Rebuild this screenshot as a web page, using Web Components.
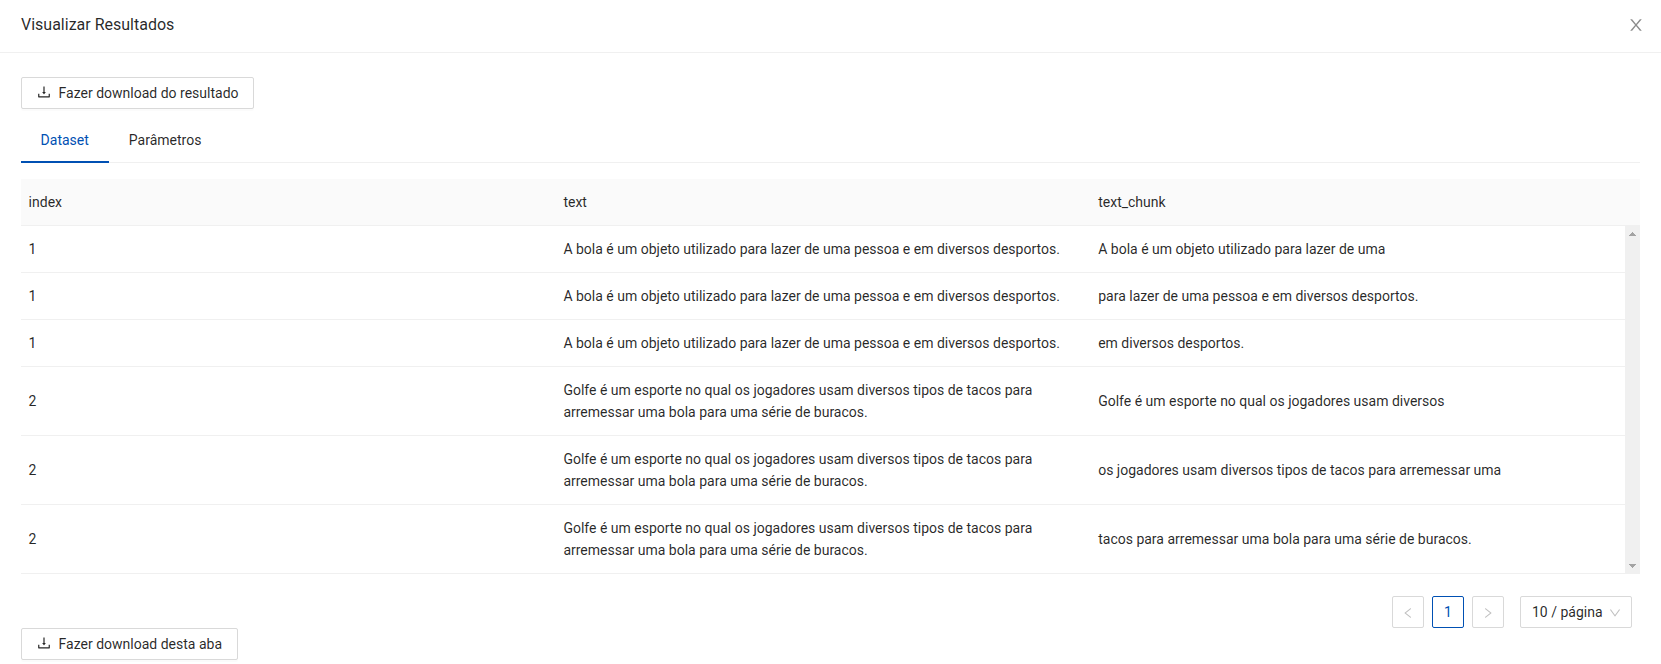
<!DOCTYPE html>
<html lang="pt-BR">
<head>
<meta charset="utf-8">
<title>Visualizar Resultados</title>
<style>
  body { margin: 0; background: #fff; font: 14px/22px Roboto, "Noto Sans", sans-serif; color: rgba(0,0,0,.85); overflow: hidden; }
</style>
</head>
<body>
<result-viewer></result-viewer>
<script>
const ICONS = {
  download: 'M505.7 661a8 8 0 0012.6 0l112-141.7c4.1-5.2.4-12.9-6.3-12.9h-74.1V168c0-4.4-3.6-8-8-8h-60c-4.4 0-8 3.6-8 8v338.3H400c-6.7 0-10.4 7.7-6.3 12.9l112 141.8zM878 626h-60c-4.4 0-8 3.6-8 8v154H214V634c0-4.4-3.6-8-8-8h-60c-4.4 0-8 3.6-8 8v198c0 17.7 14.3 32 32 32h684c17.7 0 32-14.3 32-32V634c0-4.4-3.6-8-8-8z',
  left: 'M724 218.3V141c0-6.7-7.7-10.4-12.9-6.3L260.3 486.8a31.86 31.86 0 000 50.3l450.8 352.1c5.3 4.1 12.9.4 12.9-6.3v-77.3c0-4.9-2.3-9.6-6.1-12.6l-360-281 360-281.1c3.8-3 6.1-7.7 6.1-12.6z',
  right: 'M765.7 486.8L314.9 134.7A7.97 7.97 0 00302 141v77.3c0 4.9 2.3 9.6 6.1 12.6l360 281.1-360 281.1c-3.9 3-6.1 7.7-6.1 12.6V883c0 6.7 7.7 10.4 12.9 6.3l450.8-352.1a31.96 31.96 0 000-50.4z',
  down: 'M884 256h-75c-5.1 0-9.9 2.5-12.9 6.6L512 654.2 227.9 262.6c-3-4.1-7.8-6.6-12.9-6.6h-75c-6.5 0-10.3 7.4-6.5 12.7l352.6 486.1c12.8 17.6 39 17.6 51.7 0l352.6-486.1c3.9-5.3.1-12.7-6.4-12.7z',
  close: 'M563.8 512l262.5-312.9c4.4-5.2.7-13.1-6.1-13.1h-79.8c-4.7 0-9.2 2.1-12.3 5.7L511.6 449.8 295.1 191.7c-3-3.6-7.5-5.7-12.3-5.7H203c-6.8 0-10.5 7.9-6.1 13.1L459.4 512 196.9 824.9A7.95 7.95 0 00203 838h79.8c4.7 0 9.2-2.1 12.3-5.7l216.5-258.1 216.5 258.1c3 3.6 7.5 5.7 12.3 5.7h79.8c6.8 0 10.5-7.9 6.1-13.1L563.8 512z'
};

function define(name, render) {
  customElements.define(name, class extends HTMLElement {
    connectedCallback() {
      if (this.shadowRoot) return;
      this.attachShadow({ mode: 'open' }).innerHTML = '<style>*{box-sizing:border-box}:host{box-sizing:border-box}</style>' + render(this);
    }
  });
}

define('ui-icon', el => `
  <style>:host{display:block;flex:none;width:1em;height:1em}svg{display:block}</style>
  <svg viewBox="64 64 896 896" width="1em" height="1em" fill="currentColor"><path d="${ICONS[el.getAttribute('name')]}"/></svg>`);

define('download-button', () => `
  <style>
    :host{display:flex;width:max-content;height:32px;padding:0 14.6px 0 15px;align-items:center;gap:8px;border:1px solid #d9d9d9;border-radius:2px;background:#fff;box-shadow:0 2px 0 rgba(0,0,0,.015);white-space:nowrap}
    ui-icon{margin-top:-2px}
  </style>
  <ui-icon name="download"></ui-icon><span><slot></slot></span>`);

define('tab-item', () => `
  <style>
    :host{display:block;padding:12px 20px;height:46px}
    :host([active]){color:var(--accent);border-bottom:2px solid var(--accent)}
  </style><slot></slot>`);

define('tab-bar', () => `
  <style>:host{display:flex;height:46px;box-shadow:inset 0 -1px #f0f0f0}</style><slot></slot>`);

define('table-cell', () => `
  <style>:host{display:flex;align-items:center;padding:12px 8px;min-width:0}</style><span><slot></slot></span>`);

define('table-row', el => `
  <style>
    :host{display:grid;grid-template-columns:repeat(3,1fr);border-bottom:1px solid #f0f0f0}
    :host([head]){background:#fafafa;padding-right:15px}
  </style>` + el.getAttribute('cells').split('|').map(c => `<table-cell>${c}</table-cell>`).join(''));

define('scroll-track', () => `
  <style>
    :host{display:flex;flex-direction:column;justify-content:space-between;align-items:center;width:15px;background:#f0f0f0;padding:7px 0 6px;margin-top:-1px}
    svg{display:block}
  </style>
  <svg width="7" height="4" fill="#a3a3a3" shape-rendering="crispEdges"><path d="M3 0h1v1h1v1h1v1h1v1H0V3h1V2h1V1h1z"/></svg>
  <svg width="7" height="4" fill="#a3a3a3" shape-rendering="crispEdges"><path d="M0 0h7v1H6v1H5v1H4v1H3V3H2V2H1V1H0z"/></svg>`);

define('data-table', () => {
  const a = 'A bola é um objeto utilizado para lazer de uma pessoa e em diversos desportos.';
  const g = 'Golfe é um esporte no qual os jogadores usam diversos tipos de tacos para arremessar uma bola para uma série de buracos.';
  const rows = [
    [1, a, 'A bola é um objeto utilizado para lazer de uma'],
    [1, a, 'para lazer de uma pessoa e em diversos desportos.'],
    [1, a, 'em diversos desportos.'],
    [2, g, 'Golfe é um esporte no qual os jogadores usam diversos'],
    [2, g, 'os jogadores usam diversos tipos de tacos para arremessar uma'],
    [2, g, 'tacos para arremessar uma bola para uma série de buracos.']
  ];
  return `<style>:host{display:block}.body{display:flex}.rows{flex:1}</style>
    <table-row head cells="index|text|text_chunk"></table-row>
    <div class="body"><div class="rows">${rows.map(r => `<table-row cells="${r.join('|')}"></table-row>`).join('')}</div><scroll-track></scroll-track></div>`;
});

define('page-button', () => `
  <style>
    :host{display:flex;align-items:center;justify-content:center;width:32px;height:32px;border:1px solid #d9d9d9;border-radius:2px;color:rgba(0,0,0,.25)}
    :host([active]){border-color:var(--accent);color:var(--accent)}
    ::slotted(ui-icon){font-size:12px;margin-top:1px}
  </style><slot></slot>`);

define('page-size', () => `
  <style>
    :host{display:flex;align-items:center;justify-content:space-between;width:112px;height:32px;padding:0 10px 0 11px;margin-left:8px;border:1px solid #d9d9d9;border-radius:2px;white-space:nowrap}
    ui-icon{font-size:12px;color:rgba(0,0,0,.25);margin-top:1px}
  </style><span><slot></slot></span><ui-icon name="down"></ui-icon>`);

define('result-pagination', () => `
  <style>:host{display:flex;justify-content:flex-end;gap:8px;padding-right:8px}</style>
  <page-button><ui-icon name="left"></ui-icon></page-button>
  <page-button active>1</page-button>
  <page-button><ui-icon name="right"></ui-icon></page-button>
  <page-size>10 / página</page-size>`);

define('dialog-header', () => `
  <style>
    :host{display:flex;align-items:center;justify-content:space-between;height:53px;padding:0 17px 2px 21px;border-bottom:1px solid #f0f0f0;font-size:16px}
    ui-icon{color:rgba(0,0,0,.45)}
  </style><span><slot></slot></span><ui-icon name="close"></ui-icon>`);

define('result-viewer', () => `
  <style>
    :host{display:block;height:664px;--accent:#0050b3}
    main{padding:24px 21px 0 20.6px}
    tab-bar{margin:8px 0 16px}
    result-pagination{margin-top:22px}
  </style>
  <dialog-header>Visualizar Resultados</dialog-header>
  <main>
    <download-button>Fazer download do resultado</download-button>
    <tab-bar><tab-item active>Dataset</tab-item><tab-item>Parâmetros</tab-item></tab-bar>
    <data-table></data-table>
    <result-pagination></result-pagination>
    <download-button>Fazer download desta aba</download-button>
  </main>`);
</script>
</body>
</html>
